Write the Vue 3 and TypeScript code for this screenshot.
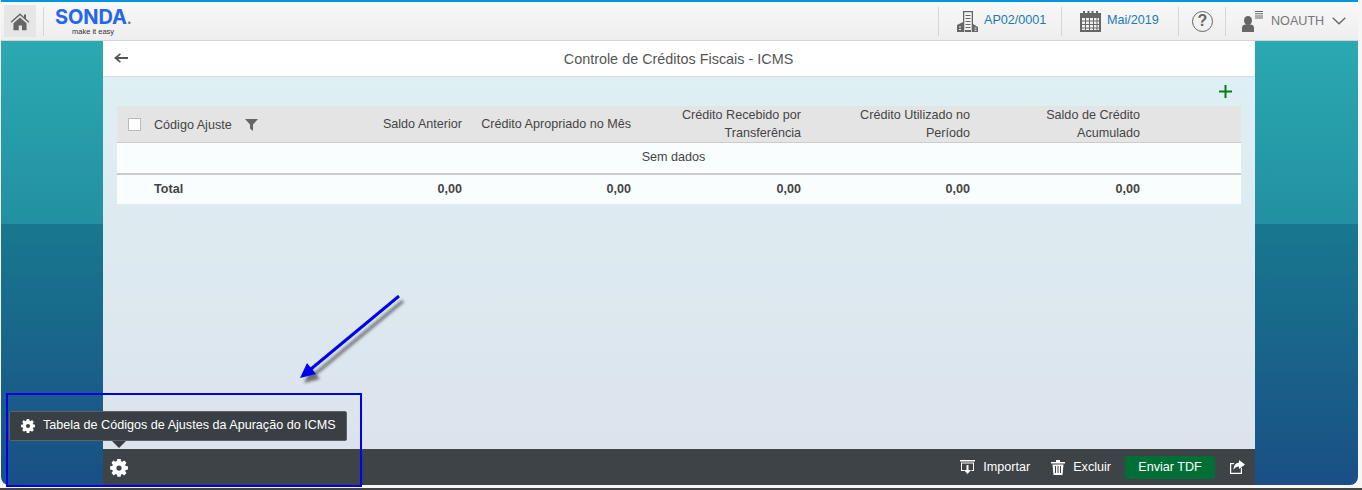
<script setup lang="ts">
interface Column {
  readonly label: string[];
  readonly total: string;
}

const columns: Column[] = [
  { label: ['Saldo Anterior'], total: '0,00' },
  { label: ['Crédito Apropriado no Mês'], total: '0,00' },
  { label: ['Crédito Recebido por', 'Transferência'], total: '0,00' },
  { label: ['Crédito Utilizado no', 'Período'], total: '0,00' },
  { label: ['Saldo de Crédito', 'Acumulado'], total: '0,00' },
];

const gearPath =
  'M9.800 0h4.400l.5 3 1.700.7 2.500-1.800 3.100 3.100-1.800 2.500.7 1.700 3 .5v4.400l-3 .5-.7 1.700 1.800 2.500-3.100 3.100-2.500-1.800-1.700.7-.5 3H9.800l-.5-3-1.700-.7-2.500 1.800-3.100-3.100 1.800-2.500-.7-1.700-3-.5V9.800l3-.5.7-1.700-1.800-2.500L4.600 1.900l2.500 1.800 1.700-.7z M12 8.500a3.500 3.500 0 1 0 0 7 3.500 3.500 0 0 0 0-7z';
</script>

<template>
  <div class="page">
    <div class="frame">
      <header class="topbar">
        <button class="home" aria-label="Início">
          <svg width="20" height="19" viewBox="0 0 22 20">
            <path d="M11 1 0.6 10.200l1 1.100L11 3.200l9.400 8.100 1-1.100L17.600 7V2.400h-2.200v2.700z" fill="#666" />
            <path d="M3.800 12 11 5.600l7.200 6.400V19.600h-5v-5.200H9.600v5.200H3.800z" fill="#666" />
          </svg>
        </button>
        <span class="sep home-sep" />
        <div class="logo">
          <span class="logo-name">SONDA<i>.</i></span>
          <span class="logo-tag">make it easy</span>
        </div>
        <div class="spacer" />
        <span class="sep" />
        <div class="nav-item nav-unit">
          <svg width="21" height="21" viewBox="0 0 21 21" fill="#666">
            <path d="M6 0h10v21H6zM7.300 1.300V21h7.400V1.300z" fill-rule="evenodd" />
            <path d="M8.500 4h5v1h-5zM8.500 7h5v1h-5zM8.500 10h5v1h-5zM8.500 13h5v1h-5zM8.500 16h5v1h-5z" />
            <path d="M0 14l6-3v10H0zM16 13l5 3v5h-5zM8 19h6v2H8z" />
            <path d="M2 15.500h2v1H2zM2 18h2v1H2zM17.500 16.500h2v1h-2zM17.500 18.800h2v1h-2z" fill="#f1f1f1" />
          </svg>
          <span class="link">AP02/0001</span>
        </div>
        <span class="sep" />
        <div class="nav-item nav-month">
          <svg width="21" height="21" viewBox="0 0 21 21" fill="#666">
            <path d="M0 2h3V0h2v2h2.500V0h2v2h2V0h2v2H16V0h2v2h3v19H0z" />
            <path d="M2 7h3v2.500H2zM6 7h3v2.500H6zM10 7h3v2.500h-3zM14 7h2.500v2.500H14zM17.500 7H19v2.500h-1.500zM2 10.500h3V13H2zM6 10.500h3V13H6zM10 10.500h3V13h-3zM14 10.500h2.500V13H14zM17.500 10.500H19V13h-1.500zM2 14h3v2.500H2zM6 14h3v2.500H6zM10 14h3v2.500h-3zM14 14h2.500v2.500H14zM17.500 14H19v2.500h-1.500zM2 17.500h3V19H2zM6 17.500h3V19H6zM10 17.500h3V19h-3zM14 17.500h2.500V19H14zM17.500 17.500H19V19h-1.500z" fill="#f1f1f1" />
          </svg>
          <span class="link">Mai/2019</span>
        </div>
        <span class="sep" />
        <div class="help">?</div>
        <span class="sep" />
        <div class="nav-item nav-user">
          <svg width="22" height="22" viewBox="0 0 22 22" fill="#666">
            <ellipse cx="6" cy="10.500" rx="4" ry="4.500" />
            <path d="M0 22v-4q0-3 3-3.500h6q3 .5 3 3.500v4z" />
            <path d="M13 1h8v1h-8zM13 3.200h8v1h-8zM13 5.400h8v1h-8zM13 7.600h8v1h-8z" />
          </svg>
          <span class="user-name">NOAUTH</span>
          <svg class="chevron" width="14" height="8" viewBox="0 0 14 8">
            <path d="M.7.7 7 6.800 13.300.7" fill="none" stroke="#666" stroke-width="1.300" />
          </svg>
        </div>
      </header>

      <main class="stage">
        <section class="panel">
          <div class="title-bar">
            <svg class="back" width="14" height="10" viewBox="0 0 15 10">
              <path d="M15 4H4.500l3-3L6.300 0 0 5l6.300 5 1.200-1-3-3H15z" fill="#555" />
            </svg>
            <h1>Controle de Créditos Fiscais - ICMS</h1>
          </div>

          <div class="content">
            <div class="add-row">
              <svg width="13" height="13" viewBox="0 0 13 13">
                <path d="M5.500 0h2v5.500H13v2H7.500V13h-2V7.500H0v-2h5.500z" fill="#0a7a1f" />
              </svg>
            </div>
            <div class="table">
              <div class="row head">
                <div class="check-cell"><span class="check" /></div>
                <div class="code-cell">
                  Código Ajuste
                  <svg width="13" height="12" viewBox="0 0 13 12">
                    <path d="M0 0h13L8 5.500V12L5 9.500V5.500z" fill="#666" />
                  </svg>
                </div>
                <div v-for="col in columns" :key="col.label[0]" class="num">
                  <span v-for="line in col.label" :key="line">{{ line }}</span>
                </div>
              </div>
              <div class="empty">Sem dados</div>
              <div class="row total">
                <div />
                <div class="total-label">Total</div>
                <div v-for="col in columns" :key="col.label[0]" class="num">{{ col.total }}</div>
              </div>
            </div>
          </div>

          <footer class="actions">
            <svg class="gear" width="18" height="18" viewBox="0 0 24 24">
              <path :d="gearPath" fill="#fff" fill-rule="evenodd" />
            </svg>
            <div class="spacer" />
            <button class="action action-import">
              <svg width="15" height="14" viewBox="0 0 15 14" fill="#fff">
                <path d="M0 0h15v1.500H0zM1 2.500h13V11h-2.500v-1H13V3.500H2V10h2.500v1H1z" />
                <path d="M6.500 5h2v5H11l-3.500 4L4 10h2.500z" />
              </svg>
              Importar
            </button>
            <button class="action action-delete">
              <svg width="14" height="15" viewBox="0 0 14 15" fill="#fff">
                <path d="M0 2h5V0h4v2h5v1.500H0zM1.500 4.500h11L11.500 15h-9zM4 6v7h1V6zM6.500 6v7h1V6zM9 6v7h1V6z" fill-rule="evenodd" />
              </svg>
              Excluir
            </button>
            <button class="send">Enviar TDF</button>
            <svg class="share" width="15" height="14" viewBox="0 0 15 14" fill="#fff">
              <path d="M9 0l6 4.500L9 9V6.500Q5 6.500 3.500 10 3.500 3 9 2.500z" />
              <path d="M0 3h4.500L3.500 4.200H1.200v8.600h9.600V8.500l1.200-1V14H0z" />
            </svg>
          </footer>
        </section>
      </main>
    </div>

    <div class="note-box" />
    <svg class="note-arrow" width="120" height="100" viewBox="0 0 120 100">
      <defs>
        <filter id="arrow-shadow" x="-20%" y="-20%" width="140%" height="140%">
          <feGaussianBlur stdDeviation="1.800" />
        </filter>
      </defs>
      <g filter="url(#arrow-shadow)" opacity="0.6" transform="translate(4 5)">
        <path d="M99 1 11 74" stroke="#222" stroke-width="3" fill="none" />
        <path d="M0 83 7 68 16 79z" fill="#222" />
      </g>
      <path d="M99 1 11 74" stroke="#0000f0" stroke-width="3" fill="none" />
      <path d="M0 83 7 68 16 79z" fill="#0000f0" />
    </svg>

    <div class="tooltip">
      <svg width="14" height="14" viewBox="0 0 24 24">
        <path :d="gearPath" fill="#fff" fill-rule="evenodd" />
      </svg>
      <span>Tabela de Códigos de Ajustes da Apuração do ICMS</span>
    </div>
  </div>
</template>

<style>
html,
body {
  margin: 0;
  background: #fff;
}
</style>

<style scoped>
.page {
  position: relative;
  width: 1362px;
  height: 490px;
  overflow: hidden;
  box-sizing: border-box;
  padding-left: 1px;
  border-bottom: 2px solid #444;
  background: #f6f6f6;
  font-family: "Liberation Sans", Arial, sans-serif;
  font-size: 12.6px;
  color: #444;
}

.frame {
  display: flex;
  flex-direction: column;
  width: 1357px;
  height: 485px;
  border-top: 2px solid #0098da;
  border-radius: 0 0 8px 8px;
  overflow: hidden;
  box-sizing: border-box;
}

.topbar {
  display: flex;
  align-items: center;
  flex: none;
  height: 39px;
  padding-right: 5px;
  box-sizing: border-box;
  border-bottom: 1px solid #d4d4d4;
  background: linear-gradient(#f8f8f8, #eeeeee);
}

.home {
  display: flex;
  align-items: center;
  justify-content: center;
  width: 32px;
  height: 32px;
  margin-left: 3px;
  padding: 0;
  border: 0;
  background: #e6e6e6;
}

.sep {
  flex: none;
  width: 1px;
  height: 29px;
  background: #d6d6d6;
}

.home-sep {
  margin-left: 7px;
}

.logo {
  display: flex;
  flex-direction: column;
  margin: 2px 0 0 11px;
  width: 82px;
}

.logo-name {
  font-family: Inter, "Liberation Sans", sans-serif;
  font-size: 20px;
  line-height: 18px;
  font-weight: 700;
  letter-spacing: -0.1px;
  color: #2566ee;
}

.logo-name i {
  font-style: normal;
  color: #777;
  font-size: 15px;
}

.logo-tag {
  margin-left: 17px;
  font-size: 7.500px;
  line-height: 8px;
  color: #333;
}

.spacer {
  flex: 1;
}

.nav-item {
  display: flex;
  align-items: center;
  height: 28px;
}

.nav-unit {
  gap: 6px;
  width: 122px;
  padding-left: 18px;
  box-sizing: border-box;
}

.nav-month {
  gap: 6px;
  width: 116px;
  padding-left: 18px;
  box-sizing: border-box;
}

.link {
  margin-top: -3px;
  color: #1c7ab2;
}

.help {
  display: flex;
  align-items: center;
  justify-content: center;
  width: 21px;
  height: 21px;
  margin: 0 12px 0 13px;
  box-sizing: border-box;
  border: 1.500px solid #666;
  border-radius: 50%;
  font-size: 16px;
  font-weight: 700;
  color: #666;
}

.nav-user {
  padding-left: 16px;
  width: 127px;
  box-sizing: border-box;
}

.user-name {
  margin-left: 7px;
  color: #777;
}

.chevron {
  margin-left: 8px;
}

.stage {
  display: flex;
  justify-content: center;
  flex: 1;
  min-height: 0;
  background: linear-gradient(
    #2ba9b1 0,
    #2290a2 183px,
    #18788f 183px,
    #1a4f85 100%
  );
}

.panel {
  display: flex;
  flex-direction: column;
  width: 1152px;
  margin-right: 1px;
}

.title-bar {
  display: flex;
  align-items: center;
  flex: none;
  height: 36px;
  box-sizing: border-box;
  border-bottom: 1px solid #d8dcde;
  background: #fff;
}

.back {
  margin: -2px 0 0 11px;
}

.title-bar h1 {
  flex: 1;
  margin: 0 26px 0 0;
  text-align: center;
  font-size: 14.400px;
  font-weight: 400;
  color: #555;
}

.content {
  flex: 1;
  padding: 0 14px;
  min-height: 0;
  background: linear-gradient(#def0f3, #dce3ec);
}

.add-row {
  display: flex;
  justify-content: flex-end;
  height: 29px;
  padding: 8px 9px 0 0;
  box-sizing: border-box;
}

.row {
  display: grid;
  grid-template-columns: 37px 191px 117px 169px 170px 169px 170px 1fr;
  align-items: center;
  box-sizing: border-box;
}

.head {
  height: 37px;
  padding-bottom: 1px;
  border-bottom: 1px solid #ccc;
  background: #e4e4e4;
}

.check-cell {
  display: flex;
  padding-left: 11px;
}

.check {
  width: 11px;
  height: 11px;
  border: 1px solid #bbb;
  background: #fff;
}

.code-cell {
  display: flex;
  align-items: center;
  gap: 13px;
  margin-top: 1px;
}

.num {
  display: flex;
  flex-direction: column;
  text-align: right;
  line-height: 18px;
}

.empty {
  height: 30px;
  padding-right: 11px;
  box-sizing: border-box;
  line-height: 29px;
  text-align: center;
  background: #fafdfe;
}

.total {
  height: 31px;
  padding-bottom: 2px;
  border-top: 2px solid #ccc;
  background: #fafdfe;
  font-weight: 700;
}

.actions {
  display: flex;
  align-items: center;
  flex: none;
  height: 36px;
  padding: 0 10px 0 7px;
  box-sizing: border-box;
  background: #3d4346;
}

.gear {
  margin-top: 2px;
}

.action {
  display: flex;
  align-items: center;
  gap: 8px;
  padding: 0;
  border: 0;
  background: none;
  font: inherit;
  color: #fff;
}

.action-delete {
  margin-left: 21px;
}

.send {
  width: 90px;
  height: 23px;
  margin-left: 14px;
  padding: 0;
  border: 0;
  border-radius: 2px;
  background: #006f37;
  font: inherit;
  color: #fff;
}

.share {
  margin-left: 15px;
}

.note-box {
  position: absolute;
  left: 6px;
  top: 393px;
  width: 352px;
  height: 90px;
  border: 2px solid #0000f0;
}

.note-arrow {
  position: absolute;
  left: 300px;
  top: 295px;
}

.tooltip {
  position: absolute;
  left: 9px;
  top: 411px;
  display: flex;
  align-items: center;
  gap: 8px;
  width: 338px;
  height: 30px;
  padding-left: 11px;
  box-sizing: border-box;
  border: 1px solid #5c6266;
  border-radius: 2px;
  background: #393f44;
  color: #fff;
}

.tooltip span {
  margin-top: -2px;
}

.tooltip::after {
  content: "";
  position: absolute;
  left: 102px;
  top: 29px;
  border: 7px solid transparent;
  border-bottom-width: 0;
  border-top-color: #393f44;
}
</style>
